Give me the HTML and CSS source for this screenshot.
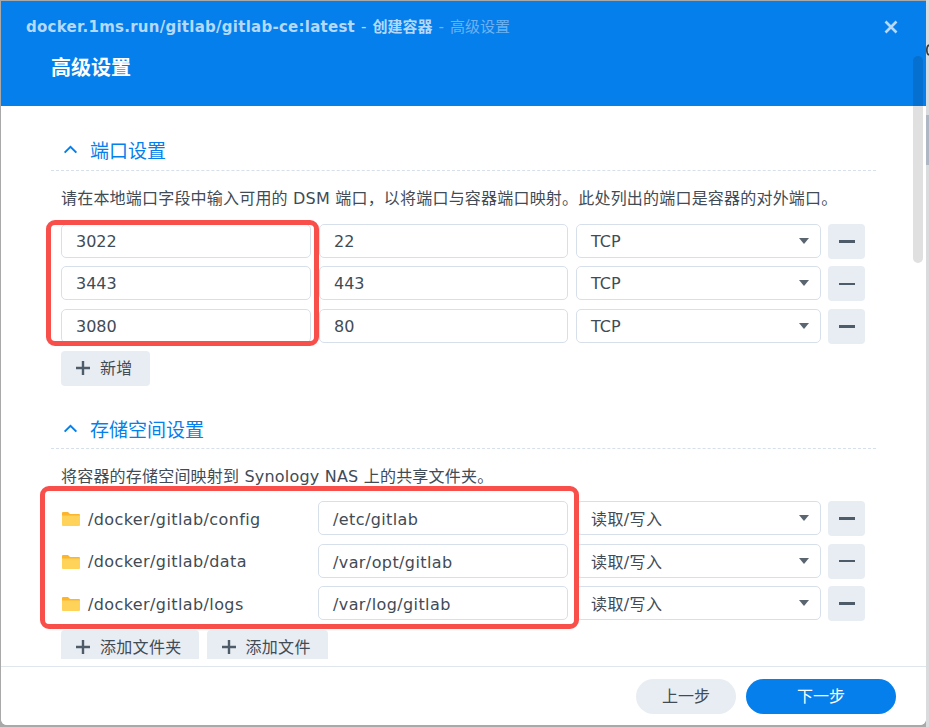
FILE: index.html
```html
<!DOCTYPE html>
<html lang="zh-CN">
<head>
<meta charset="utf-8">
<title>高级设置</title>
<link rel="stylesheet" href="styles.css">
</head>
<body>
<div class="backdrop">
  <div class="peek"><svg class="peek-arc" viewBox="0 0 3 12" width="3" height="12"><path d="M3 1Q.8 2 .8 6T3 11" stroke="#33383d" stroke-width="1.600" fill="none"/></svg></div>
  <div class="dialog">
    <header class="head">
      <div class="crumbs">
        <span class="c1 latin">docker.1ms.run/gitlab/gitlab-ce:latest</span>
        <span class="sep1">-</span>
        <span class="c1">创建容器</span>
        <span class="sep2">-</span>
        <span class="c2">高级设置</span>
      </div>
      <svg class="close" viewBox="0 0 14 14" width="14" height="14"><path d="M1.500 1.500l11 11M12.500 1.500l-11 11" stroke="#b5d8fb" stroke-width="2.600" fill="none"/></svg>
      <h1 class="title">高级设置</h1>
    </header>
    <div class="scrollthumb-top"></div>
    <main class="body">
      <div class="track"></div>
      <section class="sec sec-ports">
        <div class="sec-head">
          <svg class="chev" viewBox="0 0 16 10" width="15" height="9"><path d="M1.500 8.500L8 2l6.500 6.500" stroke="#057feb" stroke-width="2.200" fill="none"/></svg>
          <span>端口设置</span>
        </div>
        <p class="desc">请在本地端口字段中输入可用的 DSM 端口，以将端口与容器端口映射。此处列出的端口是容器的对外端口。</p>
        <div class="rows">
          <div class="row">
            <div class="field f-a">3022</div><div class="field f-b">22</div>
            <div class="field f-c">TCP<i class="caret"></i></div>
            <div class="minus"><b></b></div>
          </div>
          <div class="row">
            <div class="field f-a">3443</div><div class="field f-b">443</div>
            <div class="field f-c">TCP<i class="caret"></i></div>
            <div class="minus"><b></b></div>
          </div>
          <div class="row">
            <div class="field f-a">3080</div><div class="field f-b">80</div>
            <div class="field f-c">TCP<i class="caret"></i></div>
            <div class="minus"><b></b></div>
          </div>
          <div class="mark mark-ports"></div>
        </div>
        <div class="btns">
          <div class="btn"><svg class="plus" viewBox="0 0 16 16" width="16" height="16"><path d="M8 1v14M1 8h14" stroke="#4e5b68" stroke-width="2.400"/></svg>新增</div>
        </div>
      </section>
      <section class="sec sec-vol">
        <div class="sec-head">
          <svg class="chev" viewBox="0 0 16 10" width="15" height="9"><path d="M1.500 8.500L8 2l6.500 6.500" stroke="#057feb" stroke-width="2.200" fill="none"/></svg>
          <span>存储空间设置</span>
        </div>
        <p class="desc">将容器的存储空间映射到 Synology NAS 上的共享文件夹。</p>
        <div class="rows">
          <div class="row">
            <div class="path f-a"><svg class="folder" viewBox="0 0 18 16" width="18" height="16"><path d="M0 2a1 1 0 0 1 1-1h5l2 2h9a1 1 0 0 1 1 1v1H0z" fill="#fdb52e"/><path d="M0 4.500h18V14a1 1 0 0 1-1 1H1a1 1 0 0 1-1-1z" fill="#ffd259"/></svg>/docker/gitlab/config</div>
            <div class="field f-b">/etc/gitlab</div>
            <div class="field f-c">读取/写入<i class="caret"></i></div>
            <div class="minus"><b></b></div>
          </div>
          <div class="row">
            <div class="path f-a"><svg class="folder" viewBox="0 0 18 16" width="18" height="16"><path d="M0 2a1 1 0 0 1 1-1h5l2 2h9a1 1 0 0 1 1 1v1H0z" fill="#fdb52e"/><path d="M0 4.500h18V14a1 1 0 0 1-1 1H1a1 1 0 0 1-1-1z" fill="#ffd259"/></svg>/docker/gitlab/data</div>
            <div class="field f-b">/var/opt/gitlab</div>
            <div class="field f-c">读取/写入<i class="caret"></i></div>
            <div class="minus"><b></b></div>
          </div>
          <div class="row">
            <div class="path f-a"><svg class="folder" viewBox="0 0 18 16" width="18" height="16"><path d="M0 2a1 1 0 0 1 1-1h5l2 2h9a1 1 0 0 1 1 1v1H0z" fill="#fdb52e"/><path d="M0 4.500h18V14a1 1 0 0 1-1 1H1a1 1 0 0 1-1-1z" fill="#ffd259"/></svg>/docker/gitlab/logs</div>
            <div class="field f-b">/var/log/gitlab</div>
            <div class="field f-c">读取/写入<i class="caret"></i></div>
            <div class="minus"><b></b></div>
          </div>
          <div class="mark mark-vol"></div>
        </div>
        <div class="btns btns-vol">
          <div class="btn"><svg class="plus" viewBox="0 0 16 16" width="16" height="16"><path d="M8 1v14M1 8h14" stroke="#4e5b68" stroke-width="2.400"/></svg>添加文件夹</div>
          <div class="btn"><svg class="plus" viewBox="0 0 16 16" width="16" height="16"><path d="M8 1v14M1 8h14" stroke="#4e5b68" stroke-width="2.400"/></svg>添加文件</div>
        </div>
      </section>
    </main>
    <footer class="foot">
      <div class="pill pill-prev">上一步</div>
      <div class="pill pill-next">下一步</div>
    </footer>
  </div>
</div>
</body>
</html>
```
FILE: styles.css
```css
* { box-sizing: border-box; }
html, body { margin: 0; padding: 0; height: 100%; overflow: hidden; }
body { font-family: "DejaVu Sans", "Noto Sans CJK SC", sans-serif; }
.backdrop { position: relative; width: 929px; height: 727px; background: #a9a9a9; padding: 1px 0 0 1px; overflow: hidden; }
.peek { position: absolute; right: 0; top: 0; width: 3px; height: 727px; background: linear-gradient(#d9dbdd 0 115px, #aeb7c3 115px 165px, #d9dbdd 165px); }
.peek-arc { position: absolute; left: 0; top: 44px; display: block; }
.dialog { position: relative; width: 925px; height: 724px; background: #fff; border-radius: 0 0 6px 6px; display: flex; flex-direction: column; overflow: hidden; }
.head { position: relative; flex: none; height: 105px; background: #057feb; color: #fff; }
.crumbs { display: flex; align-items: baseline; padding: 16px 0 0 25px; font-size: 15px; line-height: 20px; font-weight: 700; white-space: nowrap; }
.latin { letter-spacing: .26px; }
.c1 { color: #b4d9fb; }
.sep1 { color: #b4d9fb; margin: 0 6px; font-weight: 400; }
.sep2 { color: #6cb2f3; margin: 0 6px; font-weight: 400; }
.c2 { color: #6cb2f3; font-weight: 400; }
.close { position: absolute; left: 883px; top: 19px; }
.title { margin: 16px 0 0 50px; font-size: 20px; line-height: 27px; font-weight: 700; font-family: "Noto Sans CJK SC", sans-serif; }
.scrollthumb-top { position: absolute; left: 912px; top: 55px; width: 10px; height: 50px; background: #0570cf; border-radius: 5px 5px 0 0; }
.body { position: relative; flex: none; height: 553px; overflow: hidden; padding: 0 50px; }
.track { position: absolute; left: 912px; top: 0; width: 10px; height: 157px; background: #e0e0e0; border-radius: 0 0 5px 5px; }
.sec { position: relative; width: 825px; }
.sec-ports { padding-top: 29px; }
.sec-vol { padding-top: 27px; }
.sec-head { display: flex; align-items: center; height: 36px; padding-bottom: 6px; border-bottom: 1px dashed #d7e0ea; color: #057feb; font-size: 19px; }
.sec-vol .sec-head { padding-bottom: 4px; }
.chev { margin: 0 12px 0 12px; }
.desc { margin: 0 0 0 10px; height: 52px; padding-top: 17px; font-size: 16px; line-height: 22px; letter-spacing: .2px; color: #414b55; white-space: nowrap; }
.sec-ports .desc { height: 53px; }
.rows { position: relative; }
.row { display: flex; gap: 8px; height: 34px; margin: 0 0 8.400px 10px; align-items: flex-start; }
.sec-vol .row { margin-bottom: 8.500px; }
.field, .path { position: relative; height: 34px; font-size: 16px; line-height: 33px; color: #414b55; }
.sec-vol .field, .sec-vol .path { line-height: 35px; letter-spacing: .4px; }
.field { border: 1px solid #d7e0ea; border-radius: 5px; padding-left: 14px; background: #fff; }
.f-a { width: 250px; }
.f-b { width: 249px; }
.f-c { width: 245px; }
.sec-vol .f-a { width: 249px; }
.sec-vol .f-b { width: 250px; }
.path { display: flex; align-items: center; padding-top: 2px; }
.folder { margin: 0 8px 0 1px; }
.caret { position: absolute; right: 11px; top: 13px; width: 0; height: 0; border-left: 5px solid transparent; border-right: 5px solid transparent; border-top: 6px solid #5a6570; }
.minus { flex: none; width: 37px; height: 35px; margin-left: -1px; background: #e8edf3; border-radius: 4px; display: flex; align-items: center; justify-content: center; }
.minus b { display: block; width: 16px; height: 2.500px; background: #4e5b68; }
.btns { display: flex; gap: 8px; margin-left: 10px; }
.btns-vol { margin-top: 10px; }
.btn { display: flex; align-items: center; height: 35px; padding: 0 17px 3px 14px; background: #e8edf3; border-radius: 4px; font-size: 16px; letter-spacing: .3px; color: #414b55; }
.plus { margin: 1px 9px 0 0; }
.mark { position: absolute; border: 5px solid #f84f4b; border-radius: 9px; pointer-events: none; }
.mark-ports { left: -5px; top: -4px; width: 273px; height: 126px; }
.mark-vol { left: -11px; top: -15px; width: 539px; height: 143px; }
.foot { flex: none; height: 59px; margin-top: 7px; border-top: 1px solid #dfe6ed; background: #fff; display: flex; justify-content: flex-end; align-items: flex-start; gap: 10px; padding: 12px 30px 0 0; }
.pill { width: 100px; height: 35px; border-radius: 18px; font-size: 16px; line-height: 35px; text-align: center; }
.pill-prev { background: #e8edf3; color: #414b55; }
.pill-next { width: 150px; background: #057feb; color: #fff; }
```
